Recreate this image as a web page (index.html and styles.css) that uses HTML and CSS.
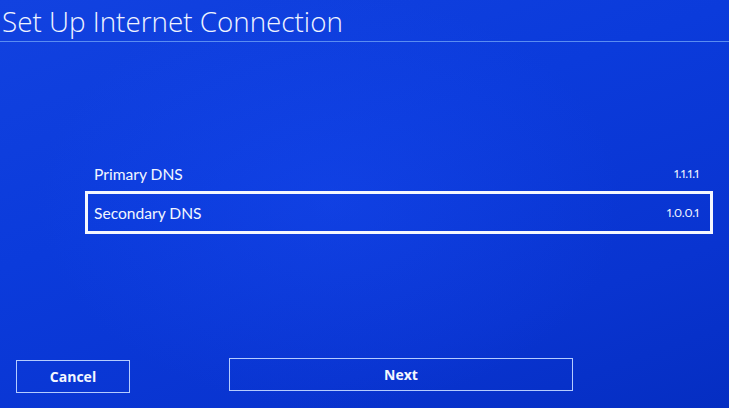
FILE: index.html
```html
<!DOCTYPE html>
<html lang="en">
<head>
<meta charset="utf-8">
<title>Set Up Internet Connection</title>
<link rel="stylesheet" href="styles.css">
</head>
<body>
<div class="screen">
  <header class="header">
    <h1 class="title">Set Up Internet Connection</h1>
  </header>
  <main class="content">
    <ul class="list">
      <li class="row"><span class="label">Primary DNS</span><span class="value">1.1.1.1</span></li>
      <li class="row row-focused"><span class="label">Secondary DNS</span><span class="value">1.0.0.1</span></li>
    </ul>
  </main>
  <footer class="footer">
    <button class="btn btn-cancel">Cancel</button>
    <button class="btn btn-next">Next</button>
  </footer>
</div>
</body>
</html>
```
FILE: styles.css
```css
html, body {
  margin: 0;
  padding: 0;
}
body {
  width: 729px;
  height: 408px;
  overflow: hidden;
  font-family: "Open Sans", "Noto Sans", sans-serif;
  color: #f2f6ff;
}
.screen {
  width: 729px;
  height: 408px;
  display: flex;
  flex-direction: column;
  background:
    radial-gradient(ellipse 420px 300px at 330px 200px, rgba(30, 80, 250, 0.3), rgba(30, 80, 250, 0) 70%),
    linear-gradient(160deg, #1242e0 0%, #0b3bdb 40%, #0934d0 75%, #052ec2 100%);
}
.header {
  padding: 4px 0 0 2px;
  border-bottom: 1px solid #5a8df2;
  height: 37px;
}
.title {
  margin: 0;
  font-weight: 300;
  font-size: 27.8px;
  line-height: 34px;
  color: #f0f4ff;
}
.content {
  flex: 1;
  padding-top: 112px;
}
.list {
  list-style: none;
  margin: 0 0 0 87px;
  padding: 0;
  width: 624px;
}
.row {
  height: 39px;
  display: flex;
  align-items: center;
  justify-content: space-between;
  padding: 0 12px 0 7px;
  box-sizing: border-box;
}
.row-focused {
  outline: 3px solid #f4f7ff;
  outline-offset: -1px;
}
.label {
  font-family: "Lato", "Open Sans", sans-serif;
  font-size: 15.6px;
  font-weight: 400;
}
.value {
  font-family: "Lato", "Open Sans", sans-serif;
  font-size: 12.3px;
  font-weight: 400;
  font-variant-numeric: proportional-nums;
  letter-spacing: -0.2px;
}
.footer {
  display: flex;
  align-items: flex-start;
  gap: 99px;
  padding: 0 0 15px 16px;
}
.btn {
  box-sizing: border-box;
  height: 33px;
  background: transparent;
  border: 1.5px solid #b5ccff;
  color: #f4f7ff;
  font-family: "Open Sans", "Noto Sans", sans-serif;
  font-weight: 700;
  font-size: 14px;
  padding: 0;
}
.btn-cancel {
  width: 114px;
  margin-top: 2px;
}
.btn-next {
  width: 344px;
}
```
